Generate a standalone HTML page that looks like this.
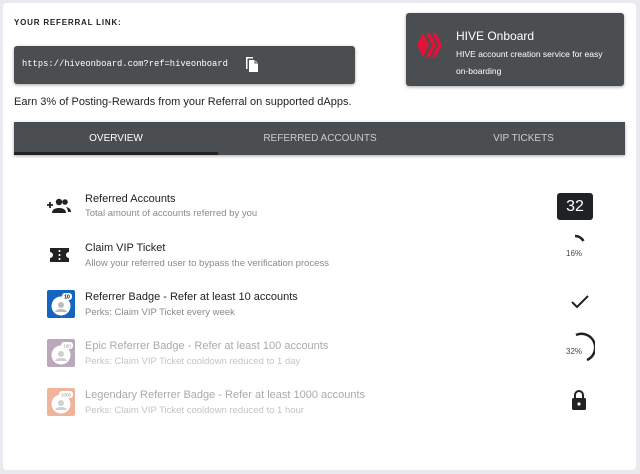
<!DOCTYPE html><html><head><style>
body{margin:0;width:640px;height:474px;background:#e9e9f0;font-family:"Liberation Sans",sans-serif;position:relative;overflow:hidden}
.card{position:absolute;left:3px;top:3px;width:633px;height:467px;background:#fff;border-radius:4px}
.a{position:absolute}
.dark{background:#4b4e51;border-radius:3px;box-shadow:0 1px 3px rgba(0,0,0,.35)}
.t{font-size:11px;color:#222;left:85px}
.s{font-size:9.5px;color:#8a8a8a;left:85px}
.g{opacity:.45}
</style></head><body><div class="card"></div>
<div class="a" style="left:14px;top:18px;font-size:8px;font-weight:bold;letter-spacing:.8px;color:#222">YOUR REFERRAL LINK:</div>
<div class="a dark" style="left:14px;top:46px;width:341px;height:38px"></div>
<div class="a" style="left:22px;top:59px;font-family:'Liberation Mono',monospace;font-size:8.8px;color:#fff">https://hiveonboard.com?ref=hiveonboard</div>
<svg class="a" style="left:244px;top:56px" width="16" height="17" viewBox="0 0 16 17"><path d="M2 1h7v1.5H3.5V13H2z" fill="#fff"/><path d="M5 4h6l3 3v9H5z" fill="#fff"/><path d="M11 4v3h3" fill="none" stroke="#4b4e51" stroke-width="1"/></svg>
<div class="a dark" style="left:406px;top:13px;width:218px;height:73px"></div>
<svg class="a" style="left:417px;top:33px" width="28" height="24" viewBox="0 0 28 24"><path d="M6 0L0 12 6 24 12 12z" fill="#e31337"/><path d="M9 0h4l6 12-6 12H9l6-12z" fill="#e31337"/><path d="M15 0h4l6 12-6 12h-4l6-12z" fill="#e31337"/></svg>
<div class="a" style="left:456px;top:29px;color:#fff;font-size:12px">HIVE Onboard</div>
<div class="a" style="left:456px;top:46px;color:#fff;font-size:8.5px;line-height:17px;width:160px">HIVE account creation service for easy on-boarding</div>
<div class="a" style="left:14px;top:96px;font-size:11px;color:#222">Earn 3% of Posting-Rewards from your Referral on supported dApps.</div>
<div class="a dark" style="left:14px;top:122px;width:611px;height:33px;border-radius:0"></div>
<div class="a" style="left:14px;top:152px;width:204px;height:3px;background:#222"></div>
<div class="a" style="left:14px;top:133px;width:204px;text-align:center;color:#fff;font-size:10px">OVERVIEW</div>
<div class="a" style="left:218px;top:133px;width:204px;text-align:center;color:#ccc;font-size:10px">REFERRED ACCOUNTS</div>
<div class="a" style="left:422px;top:133px;width:203px;text-align:center;color:#ccc;font-size:10px">VIP TICKETS</div>

<svg class="a" style="left:47px;top:198px" width="24" height="16" viewBox="0 0 24 16"><path d="M0 7h6M3 4v6" stroke="#222" stroke-width="1.8"/><circle cx="12" cy="4" r="3.2" fill="#222"/><path d="M5 15c0-4 4-5 7-5s7 1 7 5z" fill="#222"/><circle cx="18" cy="4" r="2.8" fill="#222"/><path d="M19 9c3 .5 5 2 5 5h-3c0-2-1-4-2-5z" fill="#222"/></svg>
<div class="a t" style="top:193px">Referred Accounts</div>
<div class="a s" style="top:208px">Total amount of accounts referred by you</div>
<div class="a" style="left:557px;top:193px;width:36px;height:27px;background:#1f2225;border-radius:3px;color:#fff;font-size:16px;text-align:center;line-height:27px">32</div>

<svg class="a" style="left:49px;top:247px" width="21" height="16" viewBox="0 0 21 16"><path d="M1 1h19v4a3 3 0 0 0 0 6v4H1v-4a3 3 0 0 0 0-6z" fill="#222"/><path d="M10.5 3v2M10.5 7v2M10.5 11v2" stroke="#fff" stroke-width="1.6"/></svg>
<div class="a t" style="top:242px">Claim VIP Ticket</div>
<div class="a s" style="top:258px">Allow your referred user to bypass the verification process</div>
<svg class="a" style="left:563px;top:234px" width="24" height="24" viewBox="0 0 24 24"><path d="M12 2A10 10 0 0 1 20.5 7" fill="none" stroke="#222" stroke-width="2.5"/></svg>
<div class="a" style="left:566px;top:249px;font-size:8px;color:#444">16%</div>

<svg class="a" style="left:47px;top:290px" width="28" height="28" viewBox="0 0 28 28"><rect width="28" height="28" rx="2" fill="#1565c0"/><circle cx="14" cy="16" r="9.5" fill="#fff"/><circle cx="14" cy="15" r="3" fill="#bbb"/><path d="M8 22c1-4 11-4 12 0z" fill="#bbb"/><rect x="15" y="3" width="10" height="7" rx="3" fill="#fff"/><text x="20" y="8.5" font-size="5" text-anchor="middle" font-family="Liberation Sans" font-weight="bold">10</text></svg>
<div class="a t" style="top:291px">Referrer Badge - Refer at least 10 accounts</div>
<div class="a s" style="top:307px">Perks: Claim VIP Ticket every week</div>
<svg class="a" style="left:571px;top:295px" width="18" height="14" viewBox="0 0 18 14"><path d="M1 7l5 5L17 1" fill="none" stroke="#222" stroke-width="2"/></svg>

<svg class="a g" style="left:47px;top:339px" width="28" height="28" viewBox="0 0 28 28"><rect width="28" height="28" rx="2" fill="#6a3f6e"/><circle cx="14" cy="16" r="9.5" fill="#fff"/><circle cx="14" cy="15" r="3" fill="#999"/><path d="M8 22c1-4 11-4 12 0z" fill="#999"/><rect x="14" y="3" width="12" height="7" rx="3" fill="#fff"/><text x="20" y="8.5" font-size="4.5" text-anchor="middle" font-family="Liberation Sans">100</text></svg>
<div class="a t" style="top:340px;color:#aaa">Epic Referrer Badge - Refer at least 100 accounts</div>
<div class="a s" style="top:356px;color:#c4c4c4">Perks: Claim VIP Ticket cooldown reduced to 1 day</div>
<svg class="a" style="left:563px;top:332px" width="32" height="32" viewBox="0 0 32 32"><path d="M13 3A13 13 0 0 1 24 28" fill="none" stroke="#222" stroke-width="2.5"/></svg>
<div class="a" style="left:566px;top:347px;font-size:8px;color:#444">32%</div>

<svg class="a g" style="left:47px;top:388px" width="28" height="28" viewBox="0 0 28 28"><rect width="28" height="28" rx="2" fill="#e05a22"/><circle cx="14" cy="16" r="9.5" fill="#fff"/><circle cx="14" cy="15" r="3" fill="#999"/><path d="M8 22c1-4 11-4 12 0z" fill="#999"/><rect x="12" y="3" width="14" height="7" rx="3" fill="#fff"/><text x="19" y="8.5" font-size="4.5" text-anchor="middle" font-family="Liberation Sans">1000</text></svg>
<div class="a t" style="top:389px;color:#aaa">Legendary Referrer Badge - Refer at least 1000 accounts</div>
<div class="a s" style="top:405px;color:#c4c4c4">Perks: Claim VIP Ticket cooldown reduced to 1 hour</div>
<svg class="a" style="left:571px;top:389px" width="16" height="21" viewBox="0 0 16 21"><path d="M4 9V6a4 4 0 0 1 8 0v3" fill="none" stroke="#222" stroke-width="2"/><rect x="1" y="9" width="14" height="12" rx="1.5" fill="#222"/><circle cx="8" cy="15" r="1.6" fill="#fff"/></svg>
</body></html>
